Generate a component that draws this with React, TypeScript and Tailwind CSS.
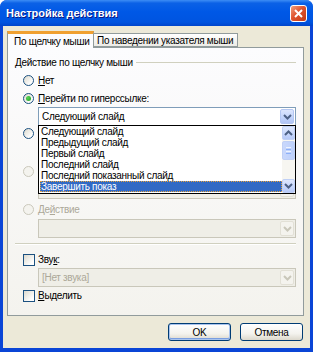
import React from 'react';
import clsx from 'clsx';

const listItems = [
  'Следующий слайд',
  'Предыдущий слайд',
  'Первый слайд',
  'Последний слайд',
  'Последний показанный слайд',
  'Завершить показ',
];

function Chevron({ color, up = false }: { color: string; up?: boolean }) {
  return (
    <svg width="9" height="6" viewBox="0 0 9 6" className={up ? 'rotate-180' : ''}>
      <path d="M1 1 L4.5 4.5 L8 1" fill="none" stroke={color} strokeWidth="2" />
    </svg>
  );
}

function Radio({ checked = false, disabled = false }: { checked?: boolean; disabled?: boolean }) {
  return (
    <span
      className={clsx(
        'flex h-[11px] w-[11px] shrink-0 items-center justify-center rounded-full border',
        disabled
          ? 'border-[#cac8bb] bg-[#f4f3ee]'
          : 'border-[#1c5180] bg-[linear-gradient(135deg,#dcd9cd,#ffffff_80%)]'
      )}
    >
      {checked && <span className="h-[5px] w-[5px] rounded-full bg-[radial-gradient(circle_at_35%_35%,#55d455,#21a121)]" />}
    </span>
  );
}

function Checkbox() {
  return (
    <span className="h-[12px] w-[12px] shrink-0 border border-[#1c5180] bg-[linear-gradient(135deg,#dcd9cd,#ffffff_80%)]" />
  );
}

function Combo({ text, disabled = false }: { text?: string; disabled?: boolean }) {
  return (
    <div
      className={clsx(
        'flex h-[19px] items-center border pl-[3px] pr-[1px]',
        disabled ? 'border-[#c9c7ba] bg-[#efeee7] text-[#aca899]' : 'border-[#7f9db9] bg-white text-black'
      )}
    >
      <span className="flex-1 truncate">{text}</span>
      <div
        className={clsx(
          'flex h-[15px] w-[14px] items-center justify-center rounded-[2px] border',
          disabled
            ? 'border-[#e2e0d6] bg-[#f4f3ee]'
            : 'border-[#b4c7f2] bg-[linear-gradient(180deg,#dce6fd,#c1d3fb_60%,#b1c5f5)]'
        )}
      >
        <Chevron color={disabled ? '#c9c7ba' : '#4d6185'} />
      </div>
    </div>
  );
}

function ScrollButton({ up = false }: { up?: boolean }) {
  return (
    <div className="flex h-[14px] items-center justify-center rounded-[2px] border border-[#c0d0f5] bg-[linear-gradient(180deg,#dfe8fd,#c6d6fc_60%,#b6c9f7)]">
      <Chevron color="#4d6185" up={up} />
    </div>
  );
}

function DropList() {
  return (
    <div className="absolute left-0 right-0 top-[18px] z-10 flex h-[69px] border border-black bg-white">
      <div className="flex flex-1 flex-col pl-[1px]">
        {listItems.map((item, i) => (
          <div
            key={item}
            className={clsx(
              'h-[11px] whitespace-nowrap pl-[1px] leading-[11px]',
              i === listItems.length - 1 &&
                'bg-[#316ac5] text-white outline outline-1 -outline-offset-1 outline-dotted outline-[#e8a33c]'
            )}
          >
            {item}
          </div>
        ))}
      </div>
      <div className="flex w-[13px] flex-col bg-[#f7f6f1]">
        <ScrollButton up />
        <div className="mt-[1px] flex h-[19px] flex-col items-center justify-center gap-[1px] rounded-[2px] border border-[#c0d0f5] bg-[linear-gradient(90deg,#c9d8fc,#bdd0fb)]">
          <span className="h-px w-[5px] bg-[#eef4fe]" />
          <span className="h-px w-[5px] bg-[#8cb0f8]" />
          <span className="h-px w-[5px] bg-[#eef4fe]" />
          <span className="h-px w-[5px] bg-[#8cb0f8]" />
        </div>
        <div className="flex-1" />
        <ScrollButton />
      </div>
    </div>
  );
}

function RadioRow({
  children,
  checked,
  disabled,
  className,
}: {
  children?: React.ReactNode;
  checked?: boolean;
  disabled?: boolean;
  className?: string;
}) {
  return (
    <div className={clsx('ml-[8px] flex h-[13px] items-center gap-[4px] whitespace-nowrap', className)}>
      <Radio checked={checked} disabled={disabled} />
      <span className={disabled ? 'text-[#aca899]' : 'text-black'}>{children}</span>
    </div>
  );
}

function XpButton({ label, isDefault = false }: { label: string; isDefault?: boolean }) {
  return (
    <div
      className={clsx(
        'flex h-[18px] w-[63px] items-center justify-center rounded-[3px] border border-[#003c74] bg-[linear-gradient(180deg,#ffffff,#f4f3ee_60%,#dcd8cc)]',
        isDefault && 'shadow-[inset_0_0_0_1px_#a9c4ee,inset_0_-1px_0_1px_#7a9ee0]'
      )}
    >
      {label}
    </div>
  );
}

export default function App() {
  return (
    <div className="flex h-[352px] w-[313px] flex-col overflow-hidden rounded-t-[7px] bg-[#0a45d6] font-[family-name:'Liberation_Sans',Arial,sans-serif] text-[10px] leading-[13px] tracking-[-0.3px] text-black">
      {/* title bar */}
      <div className="flex h-[26px] shrink-0 items-center bg-[linear-gradient(180deg,#3d8df5_0%,#0b61e6_12%,#0058e6_45%,#0054e0_85%,#0045cb_100%)] pl-[6px] pr-[6px]">
        <span className="flex-1 text-[11px] font-bold tracking-normal text-white [text-shadow:1px_1px_0_#0a1883]">Настройка действия</span>
        <div className="flex h-[17px] w-[17px] items-center justify-center rounded-[3px] border border-white bg-[linear-gradient(135deg,#f0a080,#e0542f_45%,#c43a14)]">
          <svg width="9" height="9" viewBox="0 0 9 9">
            <path d="M1 1 L8 8 M8 1 L1 8" stroke="white" strokeWidth="2" />
          </svg>
        </div>
      </div>

      {/* body */}
      <div className="mx-[3px] mb-[4px] flex flex-1 flex-col bg-[#ece9d8] pl-[4px] pr-[7px] pt-[5px]">
        {/* tabs */}
        <div className="relative z-10 -mb-px flex h-[17px] items-start whitespace-nowrap">
          <div className="flex h-[17px] w-[87px] items-center border-x border-t-[3px] border-x-[#919b9c] border-t-[#f0a030] bg-[#fcfcfe] pl-[6px] pt-[1px]">
            По щелчку мыши
          </div>
          <div className="mt-[2px] flex h-[14px] w-[144px] items-center border-y border-r border-[#919b9c] bg-[linear-gradient(180deg,#ffffff,#ecebe6)] pl-[3px]">
            По наведении указателя мыши
          </div>
        </div>

        {/* tab panel */}
        <div className="flex h-[269px] w-[297px] flex-col border border-[#919b9c] bg-[linear-gradient(180deg,#fcfcfe,#f4f3ee)] pl-[7px] pr-[7px]">
          <div className="mt-[8px] flex h-[12px] items-center whitespace-nowrap">
            <span>Действие по щелчку мыши</span>
            <span className="ml-[3px] h-px flex-1 bg-[#d0d0bf]" />
          </div>

          <RadioRow className="mt-[6px]">
            <u>Н</u>ет
          </RadioRow>
          <RadioRow className="mt-[5px]" checked>
            <u>П</u>ерейти по гиперссылке:
          </RadioRow>
          <div className="relative ml-[23px] mt-[2px]">
            <Combo text="Следующий слайд" />
            <DropList />
          </div>

          {/* rows hidden under the open list */}
          <RadioRow className="mt-[1px]" />
          <div className="ml-[23px] mt-[2px] h-[19px] border border-[#c9c7ba] bg-[#efeee7]" />
          <RadioRow className="mt-[4px]" disabled />
          <div className="ml-[23px] mt-[2px]">
            <Combo disabled />
          </div>

          <RadioRow className="mt-[4px]" disabled>
            Де<u>й</u>ствие
          </RadioRow>
          <div className="ml-[23px] mt-[3px]">
            <Combo disabled />
          </div>

          <div className="mt-[5px] h-[2px] border-t border-b border-t-[#d0d0bf] border-b-white" />

          <div className="ml-[8px] mt-[8px] flex h-[13px] items-center gap-[3px]">
            <Checkbox />
            <span>
              Зву<u>к</u>:
            </span>
          </div>
          <div className="ml-[23px] mt-[2px]">
            <Combo text="[Нет звука]" disabled />
          </div>
          <div className="ml-[8px] mt-[2px] flex h-[13px] items-center gap-[3px]">
            <Checkbox />
            <span>
              <u>В</u>ыделить
            </span>
          </div>
        </div>

        {/* buttons */}
        <div className="mt-[7px] flex justify-end gap-[9px]">
          <XpButton label="OK" isDefault />
          <XpButton label="Отмена" />
        </div>
      </div>
    </div>
  );
}
